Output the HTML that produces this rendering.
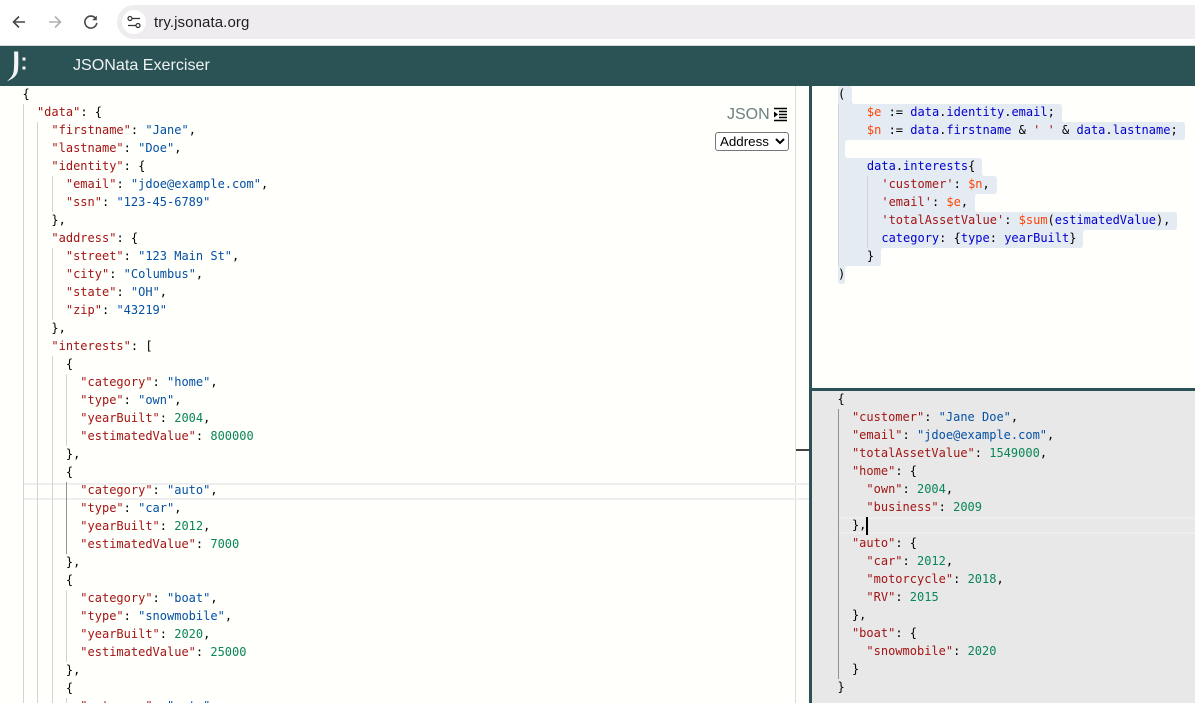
<!DOCTYPE html>
<html lang="en"><head><meta charset="utf-8"><title>JSONata Exerciser</title>
<style>
html,body{margin:0;padding:0;width:1195px;height:703px;overflow:hidden;background:#fff}
.a{position:absolute}
#pill{left:117px;top:5px;width:1078px;height:34px;background:#eeecee;border-radius:17px 0 0 17px}
#url{left:154px;top:13.500px;font:15px/18px "Liberation Sans",sans-serif;color:#1f1f1f;letter-spacing:.1px}
#hdr{left:0;top:46px;width:1195px;height:40px;background:#2b5356;border-top:0}
#hline{left:0;top:45px;width:1195px;height:1px;background:#d5dbdb}
#title{left:73px;top:55px;font:16.1px/20px "Liberation Sans",sans-serif;color:#eef2f2}
#lp{left:0;top:86px;width:809px;height:617px;background:#fffffb}
#rt{left:812px;top:86px;width:383px;height:302px;background:#fffffc}
#rb{left:812px;top:391px;width:383px;height:312px;background:#e8e8e8}
.dv{background:#2b5356}
.code{position:absolute;margin:0;font:12px/18px "DejaVu Sans Mono",monospace;color:#000;white-space:pre;font-variant-ligatures:none}
.k{color:#a31515}.s{color:#0451a5}.n{color:#098658}.i{color:#0000cd}.v{color:#ff4500}
.g{position:absolute;width:1px;background:#d3d3d3}
.gd{background:#939393}
#sel{position:absolute;left:715px;top:132px;width:74px;height:19px;box-sizing:border-box;font:13.33px "Liberation Sans",sans-serif;color:#000;background:#fff;border:1px solid #767676;border-radius:3px;padding:0;margin:0}
#json{left:727px;top:106px;font:16px/18px "Liberation Sans",sans-serif;color:#6c8281}
</style></head><body>

<!-- browser chrome -->
<svg class="a" style="left:0;top:0" width="117" height="45" viewBox="0 0 117 45" fill="none">
<path d="M25 22H14M19 16.500L13.500 22L19 27.500" stroke="#474747" stroke-width="1.600"/>
<path d="M49 22H60M55 16.500L60.500 22L55 27.500" stroke="#b0b0b0" stroke-width="1.600"/>
<path d="M95.600 18.400A6 6 0 1 0 96.800 23" stroke="#474747" stroke-width="1.600"/>
<path d="M96.800 15.600V20.200H92.200Z" fill="#474747"/>
</svg>
<div class="a" id="pill"></div>
<svg class="a" style="left:120px;top:8px" width="28" height="28" viewBox="0 0 28 28" fill="none">
<circle cx="14" cy="14" r="12" fill="#fff"/>
<circle cx="10" cy="10.500" r="2" stroke="#333" stroke-width="1.200"/>
<path d="M12.500 10.500H20M8 17.500H15.500" stroke="#333" stroke-width="1.200"/>
<circle cx="18" cy="17.500" r="2" stroke="#333" stroke-width="1.200"/>
</svg>
<div class="a" id="url">try.jsonata.org</div>

<div class="a" id="hline"></div>
<div class="a" id="hdr"></div>
<svg class="a" style="left:0;top:46px" width="40" height="40" viewBox="0 46 40 40">
<path d="M14 51.500h4.200c0 6 .5 14-.4 19.500c-1 5-5 8-10.800 10.200c3.200-3 6.300-5.200 6.800-11c.5-6 .5-12.700.2-18.700z" fill="#f4f6f6"/>
<rect x="22.500" y="57.500" width="3" height="3" fill="#f4f6f6"/>
<rect x="22.500" y="66.500" width="3" height="3" fill="#f4f6f6"/>
</svg>
<div class="a" id="title">JSONata Exerciser</div>

<!-- panes -->
<div class="a" id="lp"></div>
<div class="a" id="rt"></div>
<div class="a" id="rb"></div>
<div class="a" style="left:795px;top:86px;width:1px;height:617px;background:#dcdcdc"></div>
<div class="a" style="left:796px;top:449px;width:13px;height:2px;background:#444"></div>
<div class="a dv" style="left:809px;top:86px;width:3px;height:617px"></div>
<div class="a dv" style="left:812px;top:388px;width:383px;height:3px"></div>

<!-- left editor -->
<div class="a" style="left:24px;top:483px;width:785px;height:13px;border:solid #eeeeee;border-width:2px 0"></div>
<div class="g" style="left:23px;top:104px;height:599px"></div>
<div class="g" style="left:37px;top:122px;height:581px"></div>
<div class="g" style="left:52px;top:176px;height:36px"></div>
<div class="g" style="left:52px;top:248px;height:72px"></div>
<div class="g" style="left:52px;top:356px;height:347px"></div>
<div class="g" style="left:66px;top:374px;height:72px"></div>
<div class="g gd" style="left:66px;top:482px;height:72px"></div>
<div class="g" style="left:66px;top:590px;height:72px"></div>
<div class="g" style="left:66px;top:698px;height:5px"></div>
<div style="position:absolute;left:0;top:86px;width:795px;height:617px;overflow:hidden">
<pre class="code" style="left:22.500px;top:-1px">{
  <span class="k">"data"</span>: {
    <span class="k">"firstname"</span>: <span class="s">"Jane"</span>,
    <span class="k">"lastname"</span>: <span class="s">"Doe"</span>,
    <span class="k">"identity"</span>: {
      <span class="k">"email"</span>: <span class="s">"jdoe@example.com"</span>,
      <span class="k">"ssn"</span>: <span class="s">"123-45-6789"</span>
    },
    <span class="k">"address"</span>: {
      <span class="k">"street"</span>: <span class="s">"123 Main St"</span>,
      <span class="k">"city"</span>: <span class="s">"Columbus"</span>,
      <span class="k">"state"</span>: <span class="s">"OH"</span>,
      <span class="k">"zip"</span>: <span class="s">"43219"</span>
    },
    <span class="k">"interests"</span>: [
      {
        <span class="k">"category"</span>: <span class="s">"home"</span>,
        <span class="k">"type"</span>: <span class="s">"own"</span>,
        <span class="k">"yearBuilt"</span>: <span class="n">2004</span>,
        <span class="k">"estimatedValue"</span>: <span class="n">800000</span>
      },
      {
        <span class="k">"category"</span>: <span class="s">"auto"</span>,
        <span class="k">"type"</span>: <span class="s">"car"</span>,
        <span class="k">"yearBuilt"</span>: <span class="n">2012</span>,
        <span class="k">"estimatedValue"</span>: <span class="n">7000</span>
      },
      {
        <span class="k">"category"</span>: <span class="s">"boat"</span>,
        <span class="k">"type"</span>: <span class="s">"snowmobile"</span>,
        <span class="k">"yearBuilt"</span>: <span class="n">2020</span>,
        <span class="k">"estimatedValue"</span>: <span class="n">25000</span>
      },
      {
        <span class="k">"category"</span>: <span class="s">"auto"</span>,</pre>
</div>

<div class="a" id="json">JSON</div>
<svg class="a" style="left:773px;top:107px" width="15" height="15" viewBox="0 0 15 15">
<path d="M1 1.500H14M6 4.500H14M6 7.500H14M6 10.500H14M1 13.500H14" stroke="#000" stroke-width="1.400" fill="none"/>
<path d="M1 4.500L5 7.500L1 10.500Z" fill="#000"/>
</svg>
<select id="sel"><option>Address</option></select>

<!-- right-top editor -->
<svg class="a" style="left:0;top:0" width="1195" height="300" viewBox="0 0 1195 300">
<path fill="#e5ebf3" d="M841 86H849q3 0 3 3V101q0 3 3 3H1059q3 0 3 3V119q0 3 3 3H1182q3 0 3 3V137q0 3-3 3H848q-3 0-3 3V155q0 3 3 3H979q3 0 3 3V173q0 3 3 3H994q3 0 3 3V191q0 3-3 3H978q-3 0-3 3V209q0 3 3 3H1174q3 0 3 3V227q0 3-3 3H1086q-3 0-3 3V245q0 3-3 3H884q-3 0-3 3V263q0 3-3 3H848q-3 0-3 3V281q0 3-3 3H841q-3 0-3-3V89q0-3 3-3Z"/>
</svg>
<div class="g" style="left:838px;top:104px;height:162px"></div>
<div class="g" style="left:867px;top:176px;height:72px"></div>
<pre class="code" style="left:838px;top:85px">(
    <span class="v">$e</span> := <span class="i">data</span>.<span class="i">identity</span>.<span class="i">email</span>;
    <span class="v">$n</span> := <span class="i">data</span>.<span class="i">firstname</span> &amp; <span class="k">' '</span> &amp; <span class="i">data</span>.<span class="i">lastname</span>;

    <span class="i">data</span>.<span class="i">interests</span>{
      <span class="k">'customer'</span>: <span class="v">$n</span>,
      <span class="k">'email'</span>: <span class="v">$e</span>,
      <span class="k">'totalAssetValue'</span>: <span class="v">$sum</span>(<span class="i">estimatedValue</span>),
      <span class="i">category</span>: {<span class="i">type</span>: <span class="i">yearBuilt</span>}
    }
)</pre>

<!-- right-bottom editor -->
<div class="a" style="left:839px;top:517px;width:356px;height:13px;border:solid #ededed;border-width:2px 0"></div>
<div class="g gd" style="left:838px;top:409px;height:270px"></div>
<pre class="code" style="left:837.500px;top:390px">{
  <span class="k">"customer"</span>: <span class="s">"Jane Doe"</span>,
  <span class="k">"email"</span>: <span class="s">"jdoe@example.com"</span>,
  <span class="k">"totalAssetValue"</span>: <span class="n">1549000</span>,
  <span class="k">"home"</span>: {
    <span class="k">"own"</span>: <span class="n">2004</span>,
    <span class="k">"business"</span>: <span class="n">2009</span>
  },
  <span class="k">"auto"</span>: {
    <span class="k">"car"</span>: <span class="n">2012</span>,
    <span class="k">"motorcycle"</span>: <span class="n">2018</span>,
    <span class="k">"RV"</span>: <span class="n">2015</span>
  },
  <span class="k">"boat"</span>: {
    <span class="k">"snowmobile"</span>: <span class="n">2020</span>
  }
}</pre>
<div class="a" style="left:866px;top:517px;width:2px;height:18px;background:#000"></div>
</body></html>
